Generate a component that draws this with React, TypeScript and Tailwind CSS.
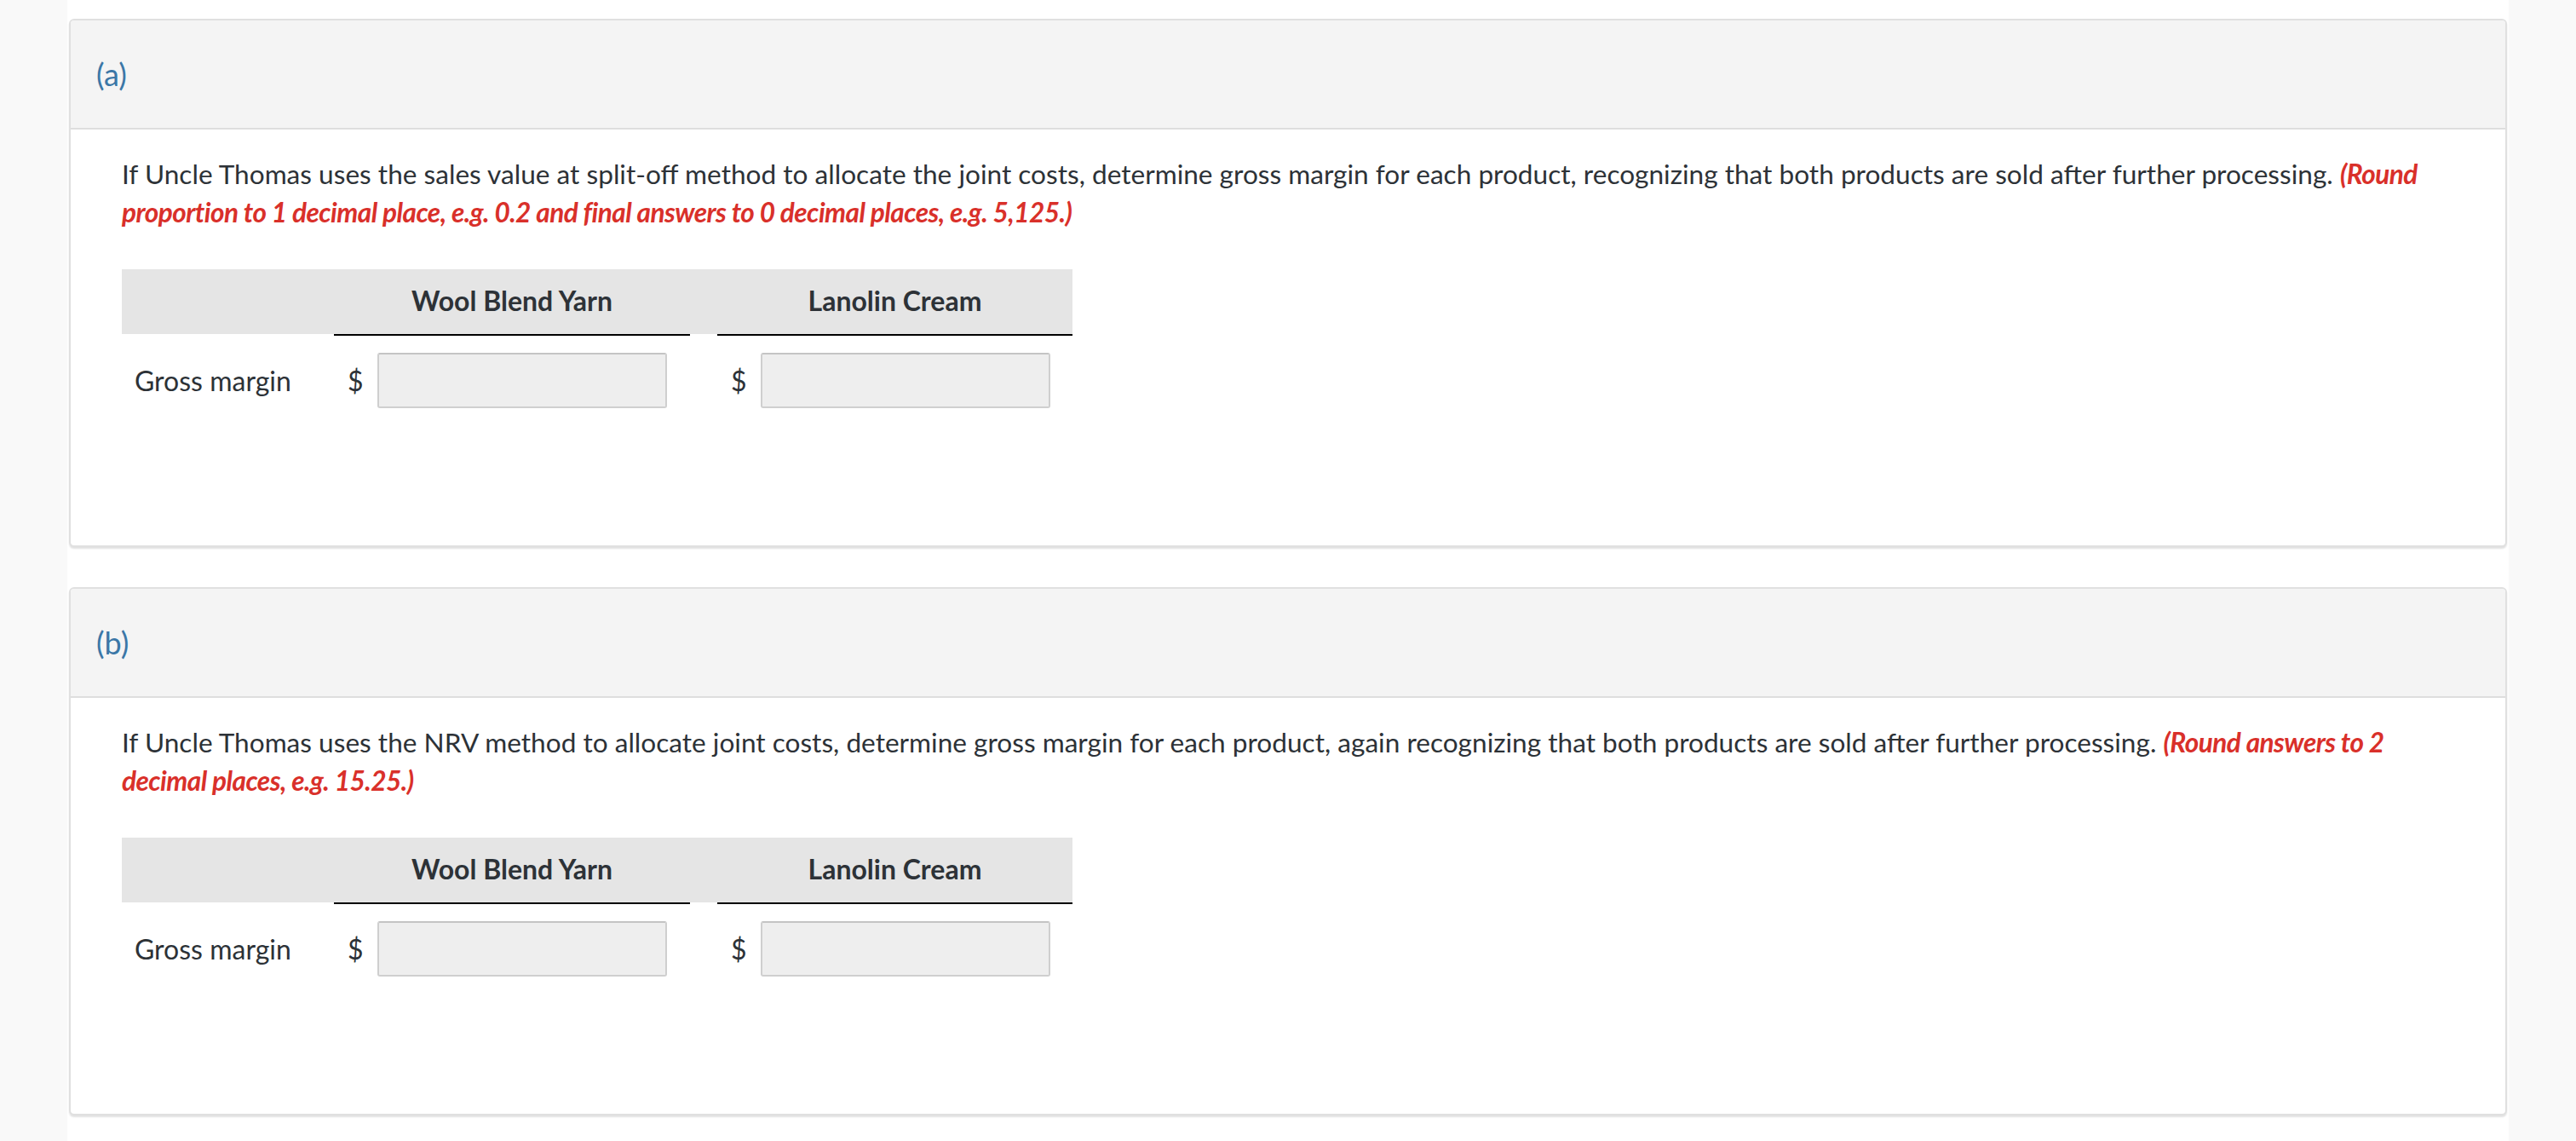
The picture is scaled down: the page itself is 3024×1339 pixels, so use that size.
import React from "react";

function AnswerTable() {
  return (
    <div className="w-[1116px]">
      <div className="flex items-start">
        <div className="w-[249px] h-[76px] bg-[#e5e5e5]" />
        <div className="w-[418px] h-[78px] bg-[#e5e5e5] border-b-2 border-black flex items-center justify-center font-bold text-[32px] text-[#2d3237] pb-[2px]">
          Wool Blend Yarn
        </div>
        <div className="w-[32px] h-[76px] bg-[#e5e5e5]" />
        <div className="w-[417px] h-[78px] bg-[#e5e5e5] border-b-2 border-black flex items-center justify-center font-bold text-[32px] text-[#2d3237] pb-[2px]">
          Lanolin Cream
        </div>
      </div>
      <div className="flex items-center mt-[20px] h-[65px]">
        <div className="w-[249px] pl-[15px] text-[32px] text-[#2d3237]">Gross margin</div>
        <div className="w-[418px] flex items-center pl-[16px]">
          <span className="text-[32px] text-[#2d3237] w-[35px]">$</span>
          <div className="w-[340px] h-[65px] bg-[#eeeeee] border-2 border-[#cfcfcf] border-t-[#c4c4c4] rounded-[3px]" />
        </div>
        <div className="w-[32px]" />
        <div className="w-[417px] flex items-center pl-[16px]">
          <span className="text-[32px] text-[#2d3237] w-[35px]">$</span>
          <div className="w-[340px] h-[65px] bg-[#eeeeee] border-2 border-[#cfcfcf] border-t-[#c4c4c4] rounded-[3px]" />
        </div>
      </div>
    </div>
  );
}

function Card({ label, text, red }: { label: string; text: string; red: string }) {
  return (
    <div className="border-2 border-[#e0e0e0] rounded-[6px] bg-white shadow-[0_2px_2px_rgba(0,0,0,0.12)] overflow-hidden">
      <div className="h-[128px] bg-[#f4f4f4] border-b-2 border-[#dedede] flex items-center pl-[30px]">
        <span className="text-[36px] text-[#3b77a7]">{label}</span>
      </div>
      <div className="pt-[30px] pl-[60px] pr-[60px] pb-[161px]">
        <p className="text-[31.6px] leading-[45px] text-[#2d3237]">
          {text} <span className="font-bold italic text-[#d9302a] tracking-[-0.55px]">{red}</span>
        </p>
        <div className="mt-[44px]">
          <AnswerTable />
        </div>
      </div>
    </div>
  );
}

export default function App() {
  return (
    <div className="min-h-[1339px] bg-[#f9f9f9] flex justify-center" style={{ fontFamily: "Lato, 'Open Sans', sans-serif" }}>
      <div className="w-[2866px] bg-white px-[2px] pt-[22px] flex flex-col gap-[47px]">
        <Card
          label="(a)"
          text="If Uncle Thomas uses the sales value at split-off method to allocate the joint costs, determine gross margin for each product, recognizing that both products are sold after further processing."
          red="(Round proportion to 1 decimal place, e.g. 0.2 and final answers to 0 decimal places, e.g. 5,125.)"
        />
        <Card
          label="(b)"
          text="If Uncle Thomas uses the NRV method to allocate joint costs, determine gross margin for each product, again recognizing that both products are sold after further processing."
          red="(Round answers to 2 decimal places, e.g. 15.25.)"
        />
      </div>
    </div>
  );
}
